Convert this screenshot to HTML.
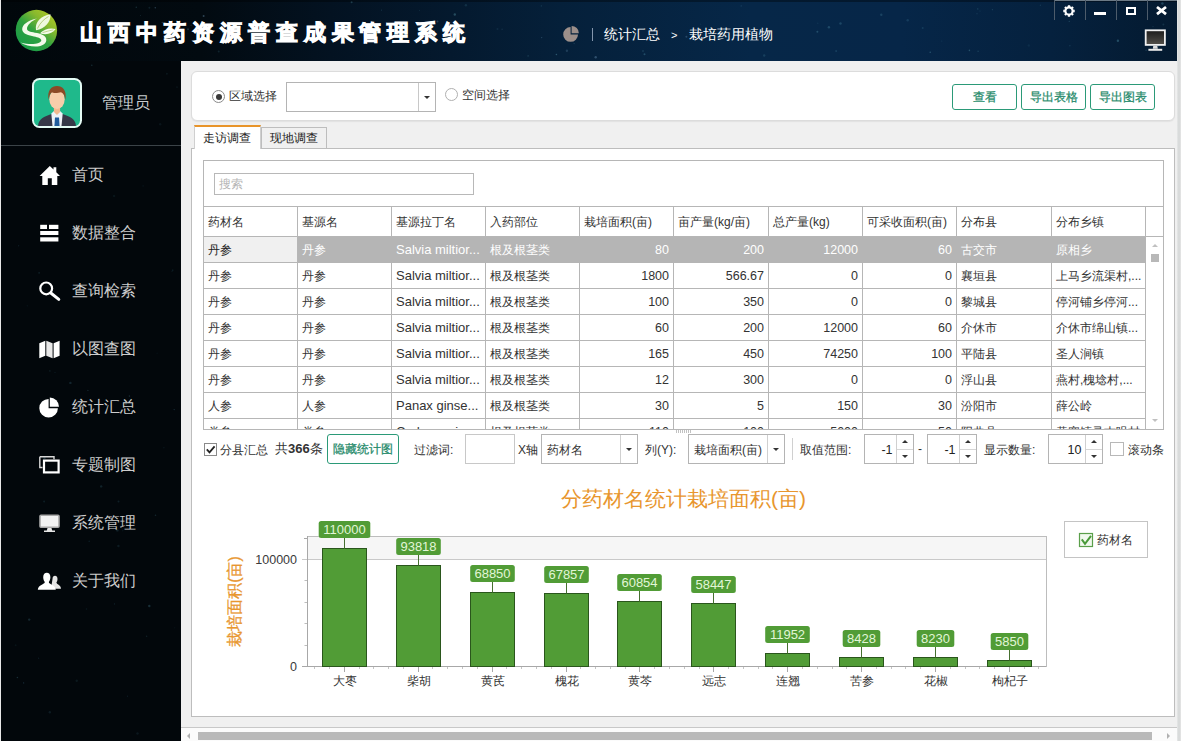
<!DOCTYPE html>
<html lang="zh">
<head>
<meta charset="utf-8">
<title>山西中药资源普查成果管理系统</title>
<style>
*{box-sizing:border-box;margin:0;padding:0}
html,body{width:1181px;height:741px;overflow:hidden;background:#f0f0f0}
body{font-family:"Liberation Sans",sans-serif;font-size:12px;color:#333;position:relative}
.abs{position:absolute}
#win{position:absolute;left:0;top:0;width:1181px;height:741px;overflow:hidden;background:#f0f0f0}
#dark{position:absolute;left:1px;top:0;width:1176px;height:741px;background:#02080c}
#hdr{position:absolute;left:1px;top:0;width:1176px;height:61px;background:linear-gradient(90deg,#01070b 0px,#020a10 200px,#031221 330px,#04192e 450px,#05203a 560px,#062748 750px,#062648 900px,#05213e 1050px,#041a30 1176px)}
#side{position:absolute;left:1px;top:61px;width:180px;height:680px;background:#02070b}
#content{position:absolute;left:181px;top:61px;width:996px;height:680px;background:#f0f0f0}
.title{position:absolute;left:80px;top:18.500px;font-size:22px;font-weight:bold;color:#fff;-webkit-text-stroke:1px #fff;letter-spacing:5.950px;white-space:nowrap;line-height:28px}
.crumb{position:absolute;top:25px;font-size:14px;color:#fff;white-space:nowrap;line-height:18px}
.menu{position:absolute;left:72px;font-size:16px;color:#cdcdcd;white-space:nowrap;line-height:20px}
.t{position:absolute;white-space:nowrap;line-height:16px;font-size:12px;color:#333}

.panel{position:absolute;background:#fff;border:1px solid #d9d9d9}
.btn{-webkit-text-stroke:0.250px #258a6a;position:absolute;top:84px;height:26px;border:1px solid #2b9a78;border-radius:3px;background:#fff;color:#258a6a;font-size:12px;line-height:25px;text-align:center;white-space:nowrap}
.radio{position:absolute;width:13px;height:13px;border:1px solid #8a8a8a;border-radius:50%;background:#fff}
.radio.on:after{content:"";position:absolute;left:2.500px;top:2.500px;width:6px;height:6px;border-radius:50%;background:#3a3a3a}
.combo{position:absolute;border:1px solid #b4b4b4;background:#fff}
.arrow{position:absolute;width:0;height:0;border-left:3px solid transparent;border-right:3px solid transparent;border-top:3px solid #333}
.tab{position:absolute;font-size:12px;text-align:center;white-space:nowrap;color:#222}
table.g{position:absolute;left:203px;top:206px;border-collapse:separate;border-spacing:0;table-layout:fixed;font-size:13px;color:#333;border-left:1px solid #b6b6b6;border-top:1px solid #b6b6b6}
table.g td{height:26px;border-right:1px solid #b6b6b6;border-bottom:1px solid #b6b6b6;padding:0 4px 0 4px;white-space:nowrap;overflow:hidden;line-height:16px;vertical-align:middle}
table.g tr.h td{height:30px}
table.g td.n{text-align:right;padding-right:4px;font-size:12.500px}
table.g td.c{font-size:12px}
table.g tr.sel td{background:#b5b5b5;color:#fff;border-right-color:#b5b5b5;border-bottom-color:#b5b5b5}
table.g tr.sel td:first-child{background:#f0f0f0;color:#222;border-right-color:#b6b6b6;border-bottom-color:#b6b6b6}
.spin{position:absolute;top:434px;height:30px;border:1px solid #b4b4b4;background:#fff}
.spin .v{position:absolute;right:20.500px;top:7px;font-size:12.500px;line-height:16px;color:#222}
.spin .sp{position:absolute;right:16px;top:0;width:1px;height:28px;background:#d0d0d0}
.up{position:absolute;width:0;height:0;border-left:3px solid transparent;border-right:3px solid transparent;border-bottom:3px solid #333}
.chk{position:absolute;width:12.500px;height:12.500px;border:1px solid #6a6a6a;background:#fff}
.spin .hd{position:absolute;right:0;top:14px;width:16px;height:1px;background:#d6d6d6}
</style>
</head>
<body>
<div id="win">
<div id="dark"></div>
<div id="hdr"></div>
<div id="side"></div>
<div class="abs" style="left:1px;top:0;width:1176px;height:2px;background:rgba(0,0,0,.35)"></div>
<svg class="abs" style="left:0;top:0" width="1177" height="741" viewBox="0 0 1177 741">
<circle cx="419.5" cy="10.4" r="0.6" fill="#5aa0b4" opacity="0.12"/>
<circle cx="465.9" cy="5.2" r="1.2" fill="#5aa0b4" opacity="0.16"/>
<circle cx="541.3" cy="5.9" r="0.6" fill="#5aa0b4" opacity="0.25"/>
<circle cx="977.8" cy="8.9" r="0.7" fill="#5aa0b4" opacity="0.28"/>
<circle cx="700.6" cy="24.2" r="0.7" fill="#4f8fa8" opacity="0.11"/>
<circle cx="381.5" cy="10.1" r="0.6" fill="#4f8fa8" opacity="0.26"/>
<circle cx="174.4" cy="34.0" r="0.7" fill="#5aa0b4" opacity="0.20"/>
<circle cx="686.4" cy="36.7" r="1.0" fill="#7aa7c8" opacity="0.29"/>
<circle cx="922.7" cy="28.1" r="1.0" fill="#4f8fa8" opacity="0.20"/>
<circle cx="941.8" cy="41.1" r="0.7" fill="#6db3c2" opacity="0.12"/>
<circle cx="643.0" cy="51.0" r="1.0" fill="#5aa0b4" opacity="0.18"/>
<circle cx="191.1" cy="25.4" r="0.8" fill="#7aa7c8" opacity="0.14"/>
<circle cx="528.1" cy="55.9" r="0.6" fill="#6db3c2" opacity="0.31"/>
<circle cx="437.5" cy="21.6" r="1.0" fill="#7aa7c8" opacity="0.26"/>
<circle cx="136.3" cy="7.2" r="0.8" fill="#5aa0b4" opacity="0.23"/>
<circle cx="127.3" cy="41.3" r="1.2" fill="#7aa7c8" opacity="0.38"/>
<circle cx="375.9" cy="23.6" r="0.8" fill="#7aa7c8" opacity="0.11"/>
<circle cx="454.6" cy="36.2" r="1.0" fill="#6db3c2" opacity="0.12"/>
<circle cx="203.6" cy="15.9" r="1.0" fill="#7aa7c8" opacity="0.36"/>
<circle cx="149.4" cy="27.2" r="1.2" fill="#4f8fa8" opacity="0.18"/>
<circle cx="969.4" cy="50.4" r="0.8" fill="#6db3c2" opacity="0.30"/>
<circle cx="817.8" cy="23.3" r="0.7" fill="#4f8fa8" opacity="0.14"/>
<circle cx="227.9" cy="38.9" r="0.6" fill="#4f8fa8" opacity="0.24"/>
<circle cx="351.6" cy="2.2" r="1.0" fill="#6db3c2" opacity="0.25"/>
<circle cx="1117.9" cy="40.7" r="1.2" fill="#5aa0b4" opacity="0.37"/>
<circle cx="566.9" cy="50.8" r="1.2" fill="#7aa7c8" opacity="0.21"/>
<circle cx="497.5" cy="29.0" r="1.0" fill="#5aa0b4" opacity="0.12"/>
<circle cx="1153.0" cy="26.7" r="0.6" fill="#5aa0b4" opacity="0.20"/>
<circle cx="173.6" cy="33.7" r="1.2" fill="#6db3c2" opacity="0.13"/>
<circle cx="741.2" cy="5.9" r="0.7" fill="#4f8fa8" opacity="0.27"/>
<circle cx="764.2" cy="55.5" r="1.2" fill="#5aa0b4" opacity="0.20"/>
<circle cx="188.0" cy="29.3" r="1.0" fill="#6db3c2" opacity="0.23"/>
<circle cx="155.3" cy="7.7" r="0.8" fill="#7aa7c8" opacity="0.31"/>
<circle cx="980.0" cy="11.0" r="0.6" fill="#6db3c2" opacity="0.16"/>
<circle cx="222.7" cy="32.4" r="0.6" fill="#6db3c2" opacity="0.31"/>
<circle cx="1146.1" cy="50.3" r="0.8" fill="#4f8fa8" opacity="0.25"/>
<circle cx="454.8" cy="14.5" r="1.2" fill="#6db3c2" opacity="0.32"/>
<circle cx="766.5" cy="36.3" r="0.7" fill="#7aa7c8" opacity="0.33"/>
<circle cx="881.3" cy="14.7" r="1.2" fill="#5aa0b4" opacity="0.24"/>
<circle cx="1158.5" cy="46.2" r="1.0" fill="#6db3c2" opacity="0.17"/>
<circle cx="556.4" cy="54.5" r="0.8" fill="#6db3c2" opacity="0.37"/>
<circle cx="149.4" cy="7.7" r="1.0" fill="#4f8fa8" opacity="0.16"/>
<circle cx="595.7" cy="57.2" r="1.2" fill="#7aa7c8" opacity="0.34"/>
<circle cx="1069.2" cy="21.3" r="0.6" fill="#5aa0b4" opacity="0.33"/>
<circle cx="1069.9" cy="45.8" r="0.7" fill="#4f8fa8" opacity="0.23"/>
<circle cx="541.7" cy="37.6" r="0.6" fill="#7aa7c8" opacity="0.32"/>
<circle cx="574.1" cy="43.6" r="0.6" fill="#4f8fa8" opacity="0.30"/>
<circle cx="1162.4" cy="3.5" r="1.2" fill="#4f8fa8" opacity="0.35"/>
<circle cx="738.8" cy="35.4" r="1.0" fill="#6db3c2" opacity="0.28"/>
<circle cx="233.1" cy="32.7" r="0.6" fill="#5aa0b4" opacity="0.10"/>
<circle cx="644.5" cy="54.3" r="1.0" fill="#4f8fa8" opacity="0.38"/>
<circle cx="977.0" cy="13.8" r="0.8" fill="#4f8fa8" opacity="0.16"/>
<circle cx="907.7" cy="20.3" r="1.2" fill="#4f8fa8" opacity="0.22"/>
<circle cx="127.6" cy="43.4" r="1.0" fill="#7aa7c8" opacity="0.29"/>
<circle cx="978.1" cy="51.2" r="0.7" fill="#5aa0b4" opacity="0.25"/>
<circle cx="1028.8" cy="45.5" r="1.2" fill="#4f8fa8" opacity="0.10"/>
<circle cx="251.3" cy="28.5" r="0.6" fill="#6db3c2" opacity="0.26"/>
<circle cx="817.4" cy="31.7" r="1.0" fill="#5aa0b4" opacity="0.32"/>
<circle cx="1040.4" cy="5.2" r="0.7" fill="#5aa0b4" opacity="0.18"/>
<circle cx="623.6" cy="33.5" r="0.6" fill="#4f8fa8" opacity="0.22"/>
<circle cx="828.9" cy="27.3" r="1.2" fill="#4f8fa8" opacity="0.33"/>
<circle cx="836.1" cy="51.1" r="0.8" fill="#4f8fa8" opacity="0.36"/>
<circle cx="992.4" cy="9.7" r="0.6" fill="#6db3c2" opacity="0.21"/>
<circle cx="140.5" cy="15.5" r="0.6" fill="#6db3c2" opacity="0.16"/>
<circle cx="930.2" cy="52.2" r="0.7" fill="#6db3c2" opacity="0.36"/>
<circle cx="218.7" cy="51.4" r="1.0" fill="#5aa0b4" opacity="0.16"/>
<circle cx="502.1" cy="29.3" r="0.7" fill="#7aa7c8" opacity="0.15"/>
<circle cx="1163.4" cy="24.6" r="1.0" fill="#6db3c2" opacity="0.15"/>
<circle cx="162.3" cy="22.5" r="0.8" fill="#7aa7c8" opacity="0.26"/>
<circle cx="840.5" cy="23.5" r="1.2" fill="#5aa0b4" opacity="0.27"/>
<circle cx="23.6" cy="682.9" r="0.7" fill="#4f8fa8" opacity="0.29"/>
<circle cx="18.6" cy="245.8" r="0.7" fill="#4f8fa8" opacity="0.14"/>
<circle cx="146.6" cy="636.3" r="0.8" fill="#5aa0b4" opacity="0.17"/>
<circle cx="163.9" cy="447.7" r="0.8" fill="#4f8fa8" opacity="0.10"/>
<circle cx="143.1" cy="185.9" r="0.6" fill="#4f8fa8" opacity="0.14"/>
<circle cx="114.4" cy="603.9" r="0.6" fill="#4f8fa8" opacity="0.21"/>
<circle cx="15.6" cy="645.2" r="1.0" fill="#5aa0b4" opacity="0.08"/>
<circle cx="76.7" cy="680.8" r="1.2" fill="#5aa0b4" opacity="0.11"/>
<circle cx="127.5" cy="696.2" r="0.7" fill="#4f8fa8" opacity="0.14"/>
<circle cx="39.1" cy="272.9" r="0.8" fill="#4f8fa8" opacity="0.20"/>
<circle cx="54.5" cy="400.1" r="0.7" fill="#4f8fa8" opacity="0.14"/>
<circle cx="177.0" cy="87.0" r="0.6" fill="#5aa0b4" opacity="0.24"/>
<circle cx="174.2" cy="409.6" r="0.7" fill="#4f8fa8" opacity="0.29"/>
<circle cx="118.5" cy="501.5" r="1.0" fill="#3f7f8f" opacity="0.20"/>
<circle cx="172.8" cy="270.1" r="0.7" fill="#3f7f8f" opacity="0.30"/>
<circle cx="38.6" cy="658.2" r="0.7" fill="#3f7f8f" opacity="0.17"/>
<circle cx="174.8" cy="627.8" r="0.6" fill="#5aa0b4" opacity="0.10"/>
<circle cx="157.1" cy="353.2" r="0.6" fill="#3f7f8f" opacity="0.10"/>
<circle cx="155.5" cy="515.3" r="0.8" fill="#5aa0b4" opacity="0.21"/>
<circle cx="55.0" cy="372.6" r="0.7" fill="#4f8fa8" opacity="0.14"/>
<circle cx="49.8" cy="712.2" r="1.2" fill="#4f8fa8" opacity="0.15"/>
<circle cx="172.0" cy="271.3" r="0.8" fill="#3f7f8f" opacity="0.12"/>
<circle cx="70.4" cy="382.9" r="1.2" fill="#4f8fa8" opacity="0.22"/>
<circle cx="91.8" cy="65.3" r="0.8" fill="#4f8fa8" opacity="0.26"/>
<circle cx="73.5" cy="90.2" r="0.6" fill="#5aa0b4" opacity="0.15"/>
<circle cx="44.5" cy="457.9" r="1.2" fill="#4f8fa8" opacity="0.27"/>
<circle cx="118.4" cy="546.0" r="1.2" fill="#3f7f8f" opacity="0.17"/>
<circle cx="129.4" cy="396.1" r="0.8" fill="#5aa0b4" opacity="0.24"/>
<circle cx="29.2" cy="619.6" r="1.2" fill="#5aa0b4" opacity="0.22"/>
<circle cx="126.0" cy="403.7" r="1.2" fill="#5aa0b4" opacity="0.25"/>
<circle cx="149.3" cy="606.0" r="1.2" fill="#5aa0b4" opacity="0.26"/>
<circle cx="122.8" cy="530.7" r="0.7" fill="#4f8fa8" opacity="0.10"/>
<circle cx="27.2" cy="305.8" r="0.6" fill="#3f7f8f" opacity="0.16"/>
<circle cx="101.2" cy="486.4" r="1.2" fill="#3f7f8f" opacity="0.23"/>
<circle cx="49.9" cy="370.9" r="0.6" fill="#5aa0b4" opacity="0.24"/>
<circle cx="160.2" cy="124.2" r="1.2" fill="#5aa0b4" opacity="0.09"/>
<circle cx="86.5" cy="609.0" r="0.8" fill="#4f8fa8" opacity="0.13"/>
<circle cx="44.1" cy="501.4" r="1.0" fill="#3f7f8f" opacity="0.19"/>
<circle cx="17.4" cy="677.5" r="0.8" fill="#5aa0b4" opacity="0.25"/>
<circle cx="114.1" cy="196.0" r="1.2" fill="#3f7f8f" opacity="0.11"/>
<circle cx="117.4" cy="530.4" r="1.2" fill="#4f8fa8" opacity="0.20"/>
<circle cx="87.9" cy="390.4" r="0.6" fill="#5aa0b4" opacity="0.23"/>
<circle cx="89.2" cy="541.2" r="0.8" fill="#3f7f8f" opacity="0.18"/>
<circle cx="137.5" cy="733.5" r="1.2" fill="#4f8fa8" opacity="0.12"/>
<circle cx="166.9" cy="73.8" r="1.0" fill="#5aa0b4" opacity="0.10"/>
</svg>
<div id="content"></div>
<div class="abs" style="left:1177px;top:0;width:4px;height:741px;background:linear-gradient(90deg,#e6e8e8 0,#d9dbdb 1.500px,#d9dbdb 2.500px,#e6e6e6 4px)"></div>
<div class="abs" style="left:0;top:0;width:1px;height:741px;background:#e8e8e8"></div>
<!-- logo -->
<svg class="abs" style="left:15px;top:9px" width="43" height="43" viewBox="0 0 43 43">
<defs><linearGradient id="lg" x1="0.150" y1="0.900" x2="0.850" y2="0.100"><stop offset="0" stop-color="#1a9c48"/><stop offset="0.450" stop-color="#2fa23f"/><stop offset="0.750" stop-color="#86b82e"/><stop offset="1" stop-color="#a9c627"/></linearGradient></defs>
<circle cx="21.400" cy="21.500" r="20.700" fill="url(#lg)"/>
<path d="M22 9.500 C13 11.500 7 15.500 7.200 20.500 C7.400 25 14 26.500 19 27.500 C23 28.300 26.500 29.500 26.300 31.500 C26 34.500 17 36.500 5.500 33.500 C14 38.800 30 39.500 31.300 31.500 C32 26.500 25.500 24.500 20 23.700 C15 23 12 22 12 19.800 C12 16 16.500 12 22 9.500 Z" fill="#f3fbea"/>
<path d="M21 21.300 C19.500 13 26 7 35.500 5.300 C36 13 30 19.800 21 21.300 Z" fill="#eef8de"/>
<path d="M22.500 19.500 C25 14 29 10 33.500 7.500" fill="none" stroke="#9dbb55" stroke-width="0.700"/>
<path d="M25 24.200 C29 20 35 18.600 40.600 20 C37.500 24.800 31 26.300 25 24.200 Z" fill="#f3fbea"/>
<path d="M27.500 23.600 C31 22.600 35 21.500 38.500 20.800" fill="none" stroke="#9dbb55" stroke-width="0.600"/>
</svg>
<!-- avatar -->
<svg class="abs" style="left:32px;top:78px" width="50" height="50" viewBox="0 0 50 50">
<defs><clipPath id="avc"><rect x="2" y="2" width="46" height="46" rx="5.500"/></clipPath></defs>
<rect x="0" y="0" width="50" height="50" rx="7.500" fill="#e4fbf5"/>
<rect x="2" y="2" width="46" height="46" rx="5.500" fill="#1fb98b"/>
<g clip-path="url(#avc)">
<path d="M6 48 C6.500 41 12 38.500 19.500 36 L30.500 36 C38 38.500 43.500 41 44 48 Z" fill="#363848"/>
<path d="M19.300 35.500 L22 33 L28 33 L30.700 35.500 L29.500 48 L20.500 48 Z" fill="#eef1f6"/>
<path d="M23 39.500 L27 39.500 L27.600 48 L22.400 48 Z" fill="#1f5b9c"/>
<path d="M21.900 28 L28.100 28 L28.100 34 L25 37 L21.900 34 Z" fill="#f3b98f"/>
<ellipse cx="25" cy="21.300" rx="7.700" ry="9.800" fill="#f7cdaa"/>
<path d="M16.600 22 C15 12 19.500 8 25 8 C30.500 8 35 12 33.400 22 C32.800 17.500 31.500 15 29 14.200 C26 15.200 21 15 19.500 14.500 C18 16 17.200 18 16.600 22 Z" fill="#8c4a26"/>
</g>
</svg>
<div class="abs" style="left:102px;top:93px;font-size:16px;line-height:20px;color:#c9cdd0;white-space:nowrap">管理员</div>
<div class="abs" style="left:1px;top:145px;width:180px;height:1px;background:#3b4348"></div>

<!-- home -->
<svg class="abs" style="left:39px;top:165px" width="22" height="21" viewBox="0 0 22 21">
<path d="M10.800 1 L14.500 4.600 L14.500 2.300 L17.300 2.300 L17.300 7.300 L21 11 L18.300 11 L18.300 20 L12.800 20 L12.800 13.300 L8.800 13.300 L8.800 20 L3.300 20 L3.300 11 L0.600 11 Z" fill="#fff"/>
</svg>
<div class="menu" style="top:165px">首页</div>
<!-- data -->
<svg class="abs" style="left:40px;top:224px" width="20" height="18" viewBox="0 0 20 18">
<rect x="0.200" y="0.800" width="6.800" height="4.200" fill="#fff"/><rect x="9" y="0.800" width="9.400" height="4.200" fill="#fff"/>
<rect x="0.200" y="7" width="18.200" height="4" fill="#fff"/><rect x="0.200" y="13.300" width="18.200" height="4.200" fill="#fff"/>
</svg>
<div class="menu" style="top:223px">数据整合</div>
<!-- search -->
<svg class="abs" style="left:38px;top:280px" width="24" height="22" viewBox="0 0 24 22">
<circle cx="8.200" cy="8.400" r="5.900" fill="none" stroke="#fff" stroke-width="2.200"/>
<path d="M12.800 13 L20.800 19.400" stroke="#fff" stroke-width="3" stroke-linecap="round"/>
</svg>
<div class="menu" style="top:281px">查询检索</div>
<!-- map -->
<svg class="abs" style="left:39px;top:340px" width="22" height="19" viewBox="0 0 22 19">
<path d="M0.300 3.300 L6.300 0.800 L6.300 15.800 L0.300 18.200 Z" fill="#fff"/>
<path d="M7.300 0.800 L13.600 3.300 L13.600 18.200 L7.300 15.800 Z" fill="#e8e8e8"/>
<path d="M14.600 3.300 L20.600 0.800 L20.600 15.800 L14.600 18.200 Z" fill="#fff"/>
</svg>
<div class="menu" style="top:339px">以图查图</div>
<!-- pie -->
<svg class="abs" style="left:38px;top:396px" width="24" height="24" viewBox="0 0 24 24">
<path d="M10.600 2.900 A9.300 9.300 0 1 0 19.900 12.200 L10.600 12.200 Z" fill="#fff"/>
<path d="M11.800 1.500 A9.200 9.200 0 0 1 21 10.700 L11.800 10.700 Z" fill="#fff"/>
</svg>
<div class="menu" style="top:397px">统计汇总</div>
<!-- layers -->
<svg class="abs" style="left:39px;top:456px" width="22" height="19" viewBox="0 0 22 19">
<path d="M0.800 0.800 L15 0.800 L15 3.200 M0.800 0.800 L0.800 11.500 L3.500 11.500" fill="none" stroke="#d8d8d8" stroke-width="1.400"/>
<rect x="5" y="4.600" width="14.600" height="11.800" fill="none" stroke="#fff" stroke-width="2.200"/>
</svg>
<div class="menu" style="top:455px">专题制图</div>
<!-- monitor -->
<svg class="abs" style="left:39px;top:514px" width="22" height="19" viewBox="0 0 22 19">
<rect x="1" y="1.300" width="19" height="12" rx="1" fill="#f2f2f2" stroke="#a9a9a9" stroke-width="1.600"/>
<path d="M8.500 14 L12.500 14 L13.200 16.500 L16 16.500 L16 18 L5 18 L5 16.500 L7.800 16.500 Z" fill="#e6e6e6"/>
</svg>
<div class="menu" style="top:513px">系统管理</div>
<!-- people -->
<svg class="abs" style="left:37px;top:572px" width="25" height="19" viewBox="0 0 25 19">
<path d="M15.500 7 C15.500 4.800 16.600 3.800 18 3.800 C19.400 3.800 20.500 4.800 20.500 7 C20.500 8.800 19.800 9.800 19.400 10.600 C19.400 12.400 23.800 12.800 24 16.800 L14 16.800 Z" fill="#e4e4e4"/>
<path d="M6.200 5.200 C6.200 2.200 7.800 0.800 9.800 0.800 C11.800 0.800 13.400 2.200 13.400 5.200 C13.400 7.600 12.400 9 11.800 10 C11.800 12.600 18.600 12.800 18.800 17.800 L0.800 17.800 C1 12.800 7.800 12.600 7.800 10 C7.200 9 6.200 7.600 6.200 5.200 Z" fill="#fff"/>
</svg>
<div class="menu" style="top:571px">关于我们</div>

<!-- breadcrumb -->
<svg class="abs" style="left:562px;top:24px" width="19" height="19" viewBox="0 0 19 19">
<path d="M8.600 3 A7.400 7.400 0 1 0 16 10.400 L8.600 10.400 Z" fill="#9c8f8a"/>
<path d="M9.600 1.900 A7.300 7.300 0 0 1 16.900 9.200 L9.600 9.200 Z" fill="#9c8f8a"/>
</svg>
<div class="abs" style="left:592px;top:28px;width:1px;height:13px;background:#8496ad"></div>
<div class="crumb" style="left:604px">统计汇总</div>
<div class="crumb" style="left:671px;font-size:11px;top:26px">&gt;</div>
<div class="crumb" style="left:689px">栽培药用植物</div>

<!-- window buttons -->
<div class="abs" style="left:1054px;top:0;width:123px;height:1px;background:#6c7a86"></div>
<div class="abs" style="left:1054px;top:0;width:1px;height:20px;background:#4d5c6b"></div>
<div class="abs" style="left:1085px;top:0;width:1px;height:20px;background:#4d5c6b"></div>
<div class="abs" style="left:1116px;top:0;width:1px;height:20px;background:#4d5c6b"></div>
<div class="abs" style="left:1147px;top:0;width:1px;height:20px;background:#4d5c6b"></div>
<svg class="abs" style="left:1063px;top:4.500px" width="12" height="12" viewBox="0 0 12 12">
<circle cx="6" cy="6" r="3.600" fill="none" stroke="#fff" stroke-width="2.100"/>
<path d="M10.10 6.00L11.70 6.00M8.90 8.90L10.03 10.03M6.00 10.10L6.00 11.70M3.10 8.90L1.97 10.03M1.90 6.00L0.30 6.00M3.10 3.10L1.97 1.97M6.00 1.90L6.00 0.30M8.90 3.10L10.03 1.97" stroke="#fff" stroke-width="2.300"/>
</svg>
<div class="abs" style="left:1094px;top:11.500px;width:12px;height:3.500px;background:#fff"></div>
<div class="abs" style="left:1126px;top:7px;width:10px;height:8px;border:2px solid #fff;border-top-width:2.500px"></div>
<svg class="abs" style="left:1155px;top:5px" width="13" height="11" viewBox="0 0 13 11"><path d="M2 2L11 9.200M11 2L2 9.200" stroke="#fff" stroke-width="2.800"/></svg>
<!-- monitor icon top right -->
<svg class="abs" style="left:1144px;top:29px" width="23" height="23" viewBox="0 0 23 23">
<defs><linearGradient id="scr" x1="0" y1="0" x2="0" y2="1"><stop offset="0" stop-color="#1c1c1c"/><stop offset="0.600" stop-color="#3c3a37"/><stop offset="1" stop-color="#55514b"/></linearGradient></defs>
<rect x="1.700" y="1.300" width="19.200" height="14.600" fill="url(#scr)" stroke="#f0f0f0" stroke-width="1.800"/>
<path d="M9.300 16.800L13.300 16.800L13.800 19.800L8.800 19.800Z" fill="#dcdcdc"/>
<rect x="4.400" y="19.800" width="13.800" height="2" fill="#e8e8e8"/>
</svg>


<!-- top panel -->
<div class="panel" style="left:191px;top:71px;width:984px;height:50px;border-radius:6px;border-color:#dcdcdc;box-shadow:0 1px 1px #e2e2e2"></div>
<div class="radio on" style="left:212px;top:90px"></div>
<div class="t" style="left:229px;top:88px;font-size:12px">区域选择</div>
<div class="combo" style="left:286px;top:82px;width:150px;height:30px"></div>
<div class="abs" style="left:418px;top:83px;width:1px;height:28px;background:#c8c8c8"></div>
<div class="arrow" style="left:424px;top:96px"></div>
<div class="radio" style="left:445px;top:88px;border-color:#b0b0b0"></div>
<div class="t" style="left:462px;top:87px;font-size:12px">空间选择</div>
<div class="btn" style="left:952px;width:65px">查看</div>
<div class="btn" style="left:1021px;width:65px">导出表格</div>
<div class="btn" style="left:1090px;width:65px">导出图表</div>

<!-- tabs -->
<div class="panel" style="left:191px;top:148px;width:984px;height:569px;border-color:#bdbdbd"></div>
<div class="tab" style="left:261px;top:127px;width:66px;height:22px;border:1px solid #bdbdbd;background:#f0f0f0;line-height:21px;padding-right:1px">现地调查</div>
<div class="tab" style="left:194px;top:125px;width:67px;height:24px;border:1px solid #cfcfcf;border-top:2px solid #e8942a;border-bottom:none;background:#fff;line-height:22px;padding-right:2px">走访调查</div>

<!-- grid panel -->
<div class="panel" style="left:203px;top:160px;width:961px;height:270px;border-color:#b6b6b6;overflow:hidden"></div>
<div class="combo" style="left:214px;top:173px;width:260px;height:22px;border-color:#b8b8b8"><span class="t" style="left:4px;top:2px;color:#b5b5b5;font-size:12px">搜索</span></div>
<div class="abs" style="left:0;top:0;width:1164px;height:429px;overflow:hidden">
<table class="g"><colgroup><col style="width:94px"><col style="width:94px"><col style="width:94px"><col style="width:94px"><col style="width:94px"><col style="width:95px"><col style="width:94px"><col style="width:94px"><col style="width:95px"><col style="width:94px"></colgroup>
<tr class="h"><td class="c">药材名</td><td class="c">基源名</td><td class="c">基源拉丁名</td><td class="c">入药部位</td><td class="c">栽培面积(亩)</td><td class="c">亩产量(kg/亩)</td><td class="c">总产量(kg)</td><td class="c">可采收面积(亩)</td><td class="c">分布县</td><td class="c">分布乡镇</td></tr>
<tr class="sel"><td class="c">丹参</td><td class="c">丹参</td><td>Salvia miltior...</td><td class="c">根及根茎类</td><td class="n">80</td><td class="n">200</td><td class="n">12000</td><td class="n">60</td><td class="c">古交市</td><td class="c">原相乡</td></tr>
<tr><td class="c">丹参</td><td class="c">丹参</td><td>Salvia miltior...</td><td class="c">根及根茎类</td><td class="n">1800</td><td class="n">566.67</td><td class="n">0</td><td class="n">0</td><td class="c">襄垣县</td><td class="c">上马乡流渠村,...</td></tr>
<tr><td class="c">丹参</td><td class="c">丹参</td><td>Salvia miltior...</td><td class="c">根及根茎类</td><td class="n">100</td><td class="n">350</td><td class="n">0</td><td class="n">0</td><td class="c">黎城县</td><td class="c">停河铺乡停河...</td></tr>
<tr><td class="c">丹参</td><td class="c">丹参</td><td>Salvia miltior...</td><td class="c">根及根茎类</td><td class="n">60</td><td class="n">200</td><td class="n">12000</td><td class="n">60</td><td class="c">介休市</td><td class="c">介休市绵山镇...</td></tr>
<tr><td class="c">丹参</td><td class="c">丹参</td><td>Salvia miltior...</td><td class="c">根及根茎类</td><td class="n">165</td><td class="n">450</td><td class="n">74250</td><td class="n">100</td><td class="c">平陆县</td><td class="c">圣人涧镇</td></tr>
<tr><td class="c">丹参</td><td class="c">丹参</td><td>Salvia miltior...</td><td class="c">根及根茎类</td><td class="n">12</td><td class="n">300</td><td class="n">0</td><td class="n">0</td><td class="c">浮山县</td><td class="c">燕村,槐埝村,...</td></tr>
<tr><td class="c">人参</td><td class="c">人参</td><td>Panax ginse...</td><td class="c">根及根茎类</td><td class="n">30</td><td class="n">5</td><td class="n">150</td><td class="n">30</td><td class="c">汾阳市</td><td class="c">薛公岭</td></tr>
<tr><td class="c">党参</td><td class="c">党参</td><td>Codonopsis ...</td><td class="c">根及根茎类</td><td class="n">110</td><td class="n">100</td><td class="n">5000</td><td class="n">50</td><td class="c">阳曲县</td><td class="c">黄寨镇录古咀村</td></tr>
</table>
</div>
<!-- vscroll -->
<div class="abs" style="left:1146px;top:206px;width:17px;height:1px;background:#b6b6b6"></div>
<div class="abs" style="left:1146px;top:236px;width:17px;height:1px;background:#b6b6b6"></div>
<div class="abs" style="left:1147px;top:237px;width:16px;height:192px;background:#fff"></div>
<div class="up" style="left:1152px;top:244px;border-bottom-color:#c0c0c0"></div>
<div class="abs" style="left:1151px;top:254px;width:8px;height:8px;background:#b8b8b8"></div>
<div class="arrow" style="left:1152px;top:419px;border-top-color:#c0c0c0"></div>

<!-- toolbar -->
<div class="abs" style="left:676px;top:430px;width:15px;height:3px;background:repeating-linear-gradient(90deg,#b4b4b4 0 1px,transparent 1px 2px),repeating-linear-gradient(0deg,#fff 0 1px,transparent 1px 2px);background-blend-mode:normal;opacity:.8"></div>
<div class="chk" style="left:203.500px;top:442.500px;width:13px;height:13px;border-color:#8a8a8a"><svg width="11" height="11" viewBox="0 0 11 11" style="position:absolute;left:0;top:0"><path d="M1.800 5.300L4.500 8.300L9.600 2.300" fill="none" stroke="#222" stroke-width="1.800"/></svg></div>
<div class="t" style="left:220px;top:442px">分县汇总</div>
<div class="t" style="left:275px;top:441px;font-size:13px">共<b>366</b>条</div>
<div class="btn" style="left:327px;top:434px;width:72px;height:30px;line-height:28px;font-size:12px">隐藏统计图</div>
<div class="t" style="left:414px;top:442px">过滤词:</div>
<div class="combo" style="left:465px;top:434px;width:50px;height:30px;border-color:#c8c8c8"></div>
<div class="t" style="left:518px;top:442px">X轴</div>
<div class="combo" style="left:541px;top:434px;width:97px;height:30px"><span class="t" style="left:5px;top:7px">药材名</span></div>
<div class="abs" style="left:620px;top:435px;width:1px;height:28px;background:#d0d0d0"></div>
<div class="arrow" style="left:626px;top:448px"></div>
<div class="t" style="left:645px;top:442px">列(Y):</div>
<div class="combo" style="left:688px;top:434px;width:97px;height:30px"><span class="t" style="left:5px;top:7px">栽培面积(亩)</span></div>
<div class="abs" style="left:767px;top:435px;width:1px;height:28px;background:#d0d0d0"></div>
<div class="arrow" style="left:773px;top:448px"></div>
<div class="abs" style="left:792px;top:438px;width:1px;height:22px;background:#d0d0d0"></div>
<div class="t" style="left:800px;top:442px">取值范围:</div>
<div class="spin" style="left:864px;width:50px"><span class="v">-1</span><span class="sp"></span><span class="hd"></span><span class="up" style="right:5px;top:5px"></span><span class="arrow" style="right:5px;top:20px"></span></div>
<div class="t" style="left:918px;top:441px">-</div>
<div class="spin" style="left:927px;width:50px"><span class="v">-1</span><span class="sp"></span><span class="hd"></span><span class="up" style="right:5px;top:5px"></span><span class="arrow" style="right:5px;top:20px"></span></div>
<div class="t" style="left:984px;top:442px">显示数量:</div>
<div class="spin" style="left:1048px;width:55px"><span class="v">10</span><span class="sp"></span><span class="hd"></span><span class="up" style="right:5px;top:5px"></span><span class="arrow" style="right:5px;top:20px"></span></div>
<div class="chk" style="left:1110px;top:442px;width:13.500px;height:13.500px;border-color:#b8b8b8"></div>
<div class="t" style="left:1128px;top:442px">滚动条</div>

<!-- chart -->
<svg class="abs" style="left:0;top:480px" width="1181" height="240" viewBox="0 480 1181 240" font-family="Liberation Sans, sans-serif">
<rect x="307.500" y="536.500" width="739" height="130" fill="#fff" stroke="#bdbdbd"/>
<rect x="308" y="537" width="738" height="22" fill="#f6f6f6"/>
<path d="M302 559.500H1046" stroke="#c9c9c9"/>
<path d="M302 666.500H307M304 538.500H307" stroke="#a8a8a8"/>
<path d="M304.500 580.500H307M304.500 602.500H307M304.500 623.500H307M304.500 645.500H307" stroke="#bdbdbd"/>
<path d="M307.500 536V667" stroke="#a8a8a8"/>
<path d="M307 666.500H1046" stroke="#a8a8a8"/>
<text x="297" y="563.800" text-anchor="end" font-size="12.500" fill="#3a3a3a">100000</text>
<text x="297" y="670.800" text-anchor="end" font-size="12.500" fill="#3a3a3a">0</text>
<path d="M314.5 667V669M329.5 667V669M359.5 667V669M373.5 667V669M388.5 667V669M403.5 667V669M432.5 667V669M447.5 667V669M462.5 667V669M477.5 667V669M506.5 667V669M521.5 667V669M536.5 667V669M551.5 667V669M580.5 667V669M595.5 667V669M610.5 667V669M625.5 667V669M654.5 667V669M669.5 667V669M684.5 667V669M699.5 667V669M728.5 667V669M743.5 667V669M758.5 667V669M772.5 667V669M802.5 667V669M817.5 667V669M832.5 667V669M846.5 667V669M876.5 667V669M891.5 667V669M905.5 667V669M920.5 667V669M950.5 667V669M965.5 667V669M979.5 667V669M994.5 667V669M1024.5 667V669M1038.5 667V669" stroke="#c4c4c4"/>
<rect x="322.5" y="548.5" width="44" height="118.0" fill="#519c36" stroke="#2a561c"/>
<path d="M344.5 538.0V548.5" stroke="#46702f"/>
<rect x="318.7" y="521.0" width="51.6" height="17" rx="2.500" fill="#519c36"/>
<text x="344.5" y="534.2" text-anchor="middle" font-size="13" fill="#e2f6d6">110000</text>
<path d="M344.5 667V672" stroke="#a8a8a8"/>
<text x="344.5" y="684.500" text-anchor="middle" font-size="12" fill="#333">大枣</text>
<rect x="396.5" y="565.5" width="44" height="101.0" fill="#519c36" stroke="#2a561c"/>
<path d="M418.5 555.0V565.5" stroke="#46702f"/>
<rect x="396.2" y="538.0" width="44.6" height="17" rx="2.500" fill="#519c36"/>
<text x="418.5" y="551.2" text-anchor="middle" font-size="13" fill="#e2f6d6">93818</text>
<path d="M418.5 667V672" stroke="#a8a8a8"/>
<text x="418.5" y="684.500" text-anchor="middle" font-size="12" fill="#333">柴胡</text>
<rect x="470.5" y="592.5" width="44" height="74.0" fill="#519c36" stroke="#2a561c"/>
<path d="M492.5 582.0V592.5" stroke="#46702f"/>
<rect x="470.2" y="565.0" width="44.6" height="17" rx="2.500" fill="#519c36"/>
<text x="492.5" y="578.2" text-anchor="middle" font-size="13" fill="#e2f6d6">68850</text>
<path d="M492.5 667V672" stroke="#a8a8a8"/>
<text x="492.5" y="684.500" text-anchor="middle" font-size="12" fill="#333">黄芪</text>
<rect x="544.5" y="593.5" width="44" height="73.0" fill="#519c36" stroke="#2a561c"/>
<path d="M566.5 583.0V593.5" stroke="#46702f"/>
<rect x="544.2" y="566.0" width="44.6" height="17" rx="2.500" fill="#519c36"/>
<text x="566.5" y="579.2" text-anchor="middle" font-size="13" fill="#e2f6d6">67857</text>
<path d="M566.5 667V672" stroke="#a8a8a8"/>
<text x="566.5" y="684.500" text-anchor="middle" font-size="12" fill="#333">槐花</text>
<rect x="617.5" y="601.5" width="44" height="65.0" fill="#519c36" stroke="#2a561c"/>
<path d="M639.5 591.0V601.5" stroke="#46702f"/>
<rect x="617.2" y="574.0" width="44.6" height="17" rx="2.500" fill="#519c36"/>
<text x="639.5" y="587.2" text-anchor="middle" font-size="13" fill="#e2f6d6">60854</text>
<path d="M639.5 667V672" stroke="#a8a8a8"/>
<text x="639.5" y="684.500" text-anchor="middle" font-size="12" fill="#333">黄芩</text>
<rect x="691.5" y="603.5" width="44" height="63.0" fill="#519c36" stroke="#2a561c"/>
<path d="M713.5 593.0V603.5" stroke="#46702f"/>
<rect x="691.2" y="576.0" width="44.6" height="17" rx="2.500" fill="#519c36"/>
<text x="713.5" y="589.2" text-anchor="middle" font-size="13" fill="#e2f6d6">58447</text>
<path d="M713.5 667V672" stroke="#a8a8a8"/>
<text x="713.5" y="684.500" text-anchor="middle" font-size="12" fill="#333">远志</text>
<rect x="765.5" y="653.5" width="44" height="13.0" fill="#519c36" stroke="#2a561c"/>
<path d="M787.5 643.0V653.5" stroke="#46702f"/>
<rect x="765.2" y="626.0" width="44.6" height="17" rx="2.500" fill="#519c36"/>
<text x="787.5" y="639.2" text-anchor="middle" font-size="13" fill="#e2f6d6">11952</text>
<path d="M787.5 667V672" stroke="#a8a8a8"/>
<text x="787.5" y="684.500" text-anchor="middle" font-size="12" fill="#333">连翘</text>
<rect x="839.5" y="657.5" width="44" height="9.0" fill="#519c36" stroke="#2a561c"/>
<path d="M861.5 647.0V657.5" stroke="#46702f"/>
<rect x="842.7" y="630.0" width="37.6" height="17" rx="2.500" fill="#519c36"/>
<text x="861.5" y="643.2" text-anchor="middle" font-size="13" fill="#e2f6d6">8428</text>
<path d="M861.5 667V672" stroke="#a8a8a8"/>
<text x="861.5" y="684.500" text-anchor="middle" font-size="12" fill="#333">苦参</text>
<rect x="913.5" y="657.5" width="44" height="9.0" fill="#519c36" stroke="#2a561c"/>
<path d="M935.5 647.0V657.5" stroke="#46702f"/>
<rect x="916.7" y="630.0" width="37.6" height="17" rx="2.500" fill="#519c36"/>
<text x="935.5" y="643.2" text-anchor="middle" font-size="13" fill="#e2f6d6">8230</text>
<path d="M935.5 667V672" stroke="#a8a8a8"/>
<text x="935.5" y="684.500" text-anchor="middle" font-size="12" fill="#333">花椒</text>
<rect x="987.5" y="660.5" width="44" height="6.0" fill="#519c36" stroke="#2a561c"/>
<path d="M1009.5 650.0V660.5" stroke="#46702f"/>
<rect x="990.7" y="633.0" width="37.6" height="17" rx="2.500" fill="#519c36"/>
<text x="1009.5" y="646.2" text-anchor="middle" font-size="13" fill="#e2f6d6">5850</text>
<path d="M1009.5 667V672" stroke="#a8a8a8"/>
<text x="1009.5" y="684.500" text-anchor="middle" font-size="12" fill="#333">枸杞子</text>
<text x="683.500" y="506" text-anchor="middle" font-size="21" fill="#e8962e">分药材名统计栽培面积(亩)</text>
<text transform="translate(240,601.500) rotate(-90)" text-anchor="middle" font-size="16" fill="#e8962e" stroke="#e8962e" stroke-width="0.300">栽培面积(亩)</text>
<rect x="1064.500" y="521.500" width="83" height="36" fill="#fff" stroke="#c4c4c4"/>
<rect x="1079.500" y="533.500" width="13" height="13" fill="#f1f9ee" stroke="#5a9f4a" stroke-width="1.200"/>
<path d="M1081.800 539.300L1085 543.800L1091 535.800" fill="none" stroke="#4a9a3a" stroke-width="2"/>
<text x="1097" y="544" font-size="12" fill="#333">药材名</text>
</svg>

<!-- bottom scrollbar -->
<div class="abs" style="left:181px;top:727px;width:996px;height:1px;background:#c8c8c8"></div>
<div class="abs" style="left:181px;top:728px;width:996px;height:13px;background:#fbfbfb"></div>
<div class="abs" style="left:198px;top:732px;width:954px;height:8px;background:#b9b9b9"></div>
<div class="abs" style="left:187px;top:733px;width:0;height:0;border-top:3px solid transparent;border-bottom:3px solid transparent;border-right:3px solid #b0b0b0"></div>
<div class="abs" style="left:1167px;top:733px;width:0;height:0;border-top:3px solid transparent;border-bottom:3px solid transparent;border-left:3px solid #b0b0b0"></div>

<div class="title">山西中药资源普查成果管理系统</div>
</div>
</body>
</html>
